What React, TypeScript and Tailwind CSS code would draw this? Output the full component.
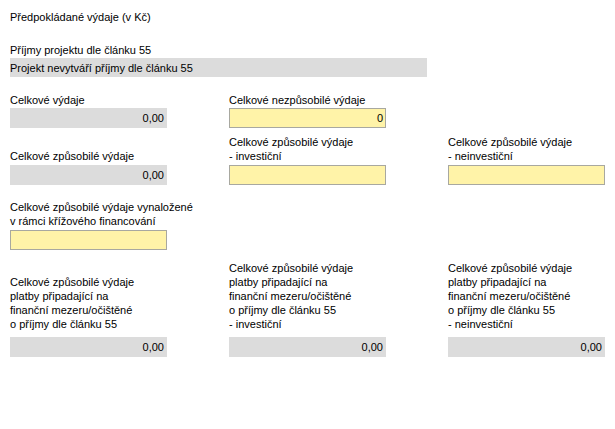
import React, { ReactElement } from "react";

function GrayBox(p: { value?: string; className?: string }): ReactElement {
  return (
    <div
      className={`flex h-[20px] w-[157px] items-center justify-end bg-[#dcdcdc] pr-[3px] ${p.className || ""}`}
    >
      {p.value}
    </div>
  );
}

function YellowBox(p: { value?: string }): ReactElement {
  return (
    <div className="flex h-[20px] w-[157px] items-center justify-end border border-[#a8a8a0] bg-[#fff3a8] pr-[2px]">
      {p.value}
    </div>
  );
}

function Field(p: { lines: string[]; children: React.ReactNode; gap?: string; last?: boolean }): ReactElement {
  return (
    <div className={`flex shrink-0 flex-col justify-end ${p.last ? "w-[158px]" : "w-[219px]"}`}>
      <div className={p.gap || "mb-px"}>
        {p.lines.map((l: string, i: number) => (
          <p key={i} className="whitespace-nowrap">{l}</p>
        ))}
      </div>
      {p.children}
    </div>
  );
}

export default function App(): ReactElement {
  return (
    <div
      className="min-h-[429px] w-[615px] bg-white px-[10px] pt-[10px] text-[11px] leading-[14px] text-black"
      style={{ fontFamily: '"Liberation Sans", Arial, sans-serif' }}
    >
      <p>Předpokládané výdaje (v Kč)</p>

      <p className="mt-[19px]">Příjmy projektu dle článku 55</p>
      <div className="mt-px flex h-[19px] w-[417px] items-center bg-[#dcdcdc]">
        Projekt nevytváří příjmy dle článku 55
      </div>

      <div className="mt-[16px] flex items-end">
        <Field lines={["Celkové výdaje"]}>
          <GrayBox value="0,00" />
        </Field>
        <Field lines={["Celkové nezpůsobilé výdaje"]}>
          <YellowBox value="0" />
        </Field>
      </div>

      <div className="mt-[7px] flex items-end">
        <Field lines={["Celkové způsobilé výdaje"]} gap="mb-[2px]">
          <GrayBox value="0,00" />
        </Field>
        <Field lines={["Celkové způsobilé výdaje", "- investiční"]} gap="mb-[2px]">
          <YellowBox />
        </Field>
        <Field lines={["Celkové způsobilé výdaje", "- neinvestiční"]} gap="mb-[2px]" last>
          <YellowBox />
        </Field>
      </div>

      <div className="mt-[15px] flex items-end">
        <Field
          lines={["Celkové způsobilé výdaje vynaložené", "v rámci křížového financování"]}
          gap="mb-[2px]"
        >
          <YellowBox />
        </Field>
      </div>

      <div className="mt-[11px] flex items-end">
        <Field
          lines={[
            "Celkové způsobilé výdaje",
            "platby připadající na",
            "finanční mezeru/očištěné",
            "o příjmy dle článku 55",
          ]}
          gap="mb-[6px]"
        >
          <GrayBox value="0,00" />
        </Field>
        <Field
          lines={[
            "Celkové způsobilé výdaje",
            "platby připadající na",
            "finanční mezeru/očištěné",
            "o příjmy dle článku 55",
            "- investiční",
          ]}
          gap="mb-[6px]"
        >
          <GrayBox value="0,00" />
        </Field>
        <Field
          lines={[
            "Celkové způsobilé výdaje",
            "platby připadající na",
            "finanční mezeru/očištěné",
            "o příjmy dle článku 55",
            "- neinvestiční",
          ]}
          gap="mb-[6px]"
          last
        >
          <GrayBox value="0,00" />
        </Field>
      </div>
    </div>
  );
}
